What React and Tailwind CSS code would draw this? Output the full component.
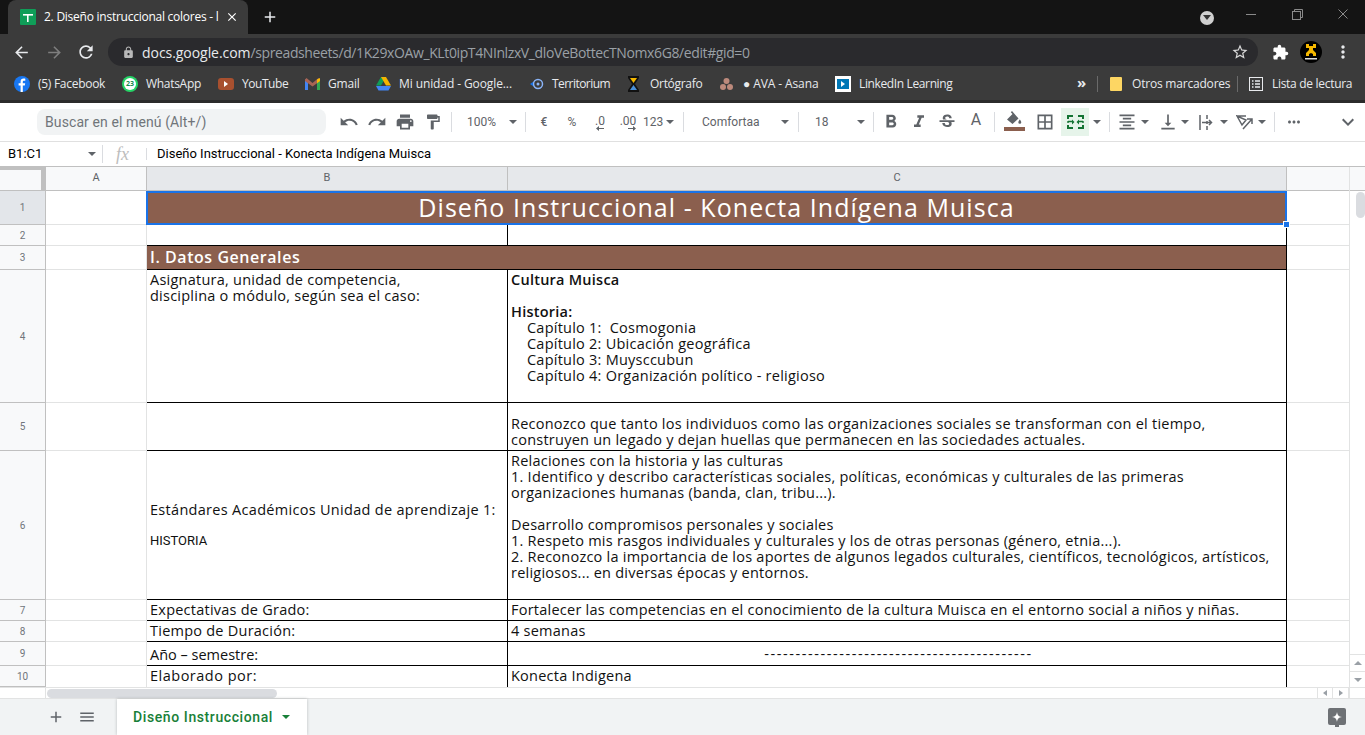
import React from "react";
import { MdUndo, MdRedo, MdPrint, MdFormatPaint, MdFormatBold, MdFormatItalic, MdStrikethroughS, MdBorderAll, MdVerticalAlignBottom, MdMoreHoriz, MdExpandMore, MdArrowBack, MdArrowForward, MdRefresh, MdLock, MdStarBorder, MdExtension, MdMoreVert, MdAdd, MdClose, MdMenu, MdFormatAlignCenter } from "react-icons/md";

const Caret = ({ className = "" }) => <span className={"block w-0 h-0 border-l-[4px] border-r-[4px] border-t-[4px] border-l-transparent border-r-transparent border-t-[#5f6368] " + className} />;
const Divider = ({ className = "" }) => <span className={"block w-px h-[20px] bg-[#dadce0] shrink-0 " + className} />;
const Btn = ({ children, className = "" }) => <span className={"flex items-center justify-center h-[28px] w-[28px] shrink-0 text-[#5f6368] " + className}>{children}</span>;

function Bookmark({ icon, label, className = "", labelClass = "" }) {
  return (
    <span className={"flex items-center shrink-0 " + className}>
      {icon}
      <span className={"whitespace-nowrap " + labelClass}>{label}</span>
    </span>
  );
}

function ChromeBar() {
  return (
    <div className="font-['Open_Sans',sans-serif]">
      <div className="h-[34px] bg-[#141414] flex items-end pl-[8px]">
        <div className="w-[240px] h-[34px] bg-[#3b3b3b] rounded-t-[8px] flex items-center pl-[12px] text-white text-[12px]">
          <svg width="16" height="16" viewBox="0 0 16 16" className="shrink-0"><rect width="16" height="16" rx="1" fill="#0f9d58" /><rect x="3" y="5" width="10" height="1.6" fill="#fff" /><rect x="7" y="5" width="1.6" height="8" fill="#fff" /></svg>
          <span className="ml-[8px] w-[176px] overflow-hidden whitespace-nowrap tracking-[-0.25px]">2. Diseño instruccional colores - l</span>
          <MdClose size={14} className="ml-[5px] text-white" />
        </div>
        <div className="h-[34px] flex items-center ml-[13px] text-[#e8eaed]"><MdAdd size={18} /></div>
        <div className="flex-1" />
        <div className="h-[34px] flex items-center mr-[17px]">
          <span className="w-[14px] h-[14px] rounded-full bg-[#d0d0d0] flex items-center justify-center mr-[32px] mt-[1px]"><span className="block w-0 h-0 border-l-[4px] border-r-[4px] border-t-[5px] border-l-transparent border-r-transparent border-t-[#333]" /></span>
          <span className="w-[10px] h-px bg-[#8a8a8a] mr-[36px] mb-[6px]" />
          <svg width="11" height="11" viewBox="0 0 11 11" className="mr-[35px] mb-[6px]" fill="none" stroke="#8a8a8a"><rect x="0.5" y="2.5" width="8" height="8" /><path d="M2.5 2.5V.5h8v8H8.5" /></svg>
          <svg width="10" height="10" viewBox="0 0 10 10" className="mb-[6px]" stroke="#8a8a8a"><path d="M.5.5l9 9M9.5.5l-9 9" /></svg>
        </div>
      </div>
      <div className="h-[33px] bg-[#3b3b3b] flex items-center pt-[3px]">
        <MdArrowBack size={19} className="ml-[12px] text-[#e8eaed]" />
        <MdArrowForward size={19} className="ml-[14px] text-[#7e7e7e]" />
        <MdRefresh size={20} className="ml-[12px] text-[#e8eaed]" />
        <div className="ml-[12px] w-[1150px] h-[28px] rounded-full bg-[#2a2a2d] flex items-center relative">
          <MdLock size={13} className="ml-[14px] text-[#b8b8b8]" />
          <span className="ml-[7px] text-[14px] whitespace-nowrap"><span className="text-[#e8eaed] tracking-[-0.05px]">docs.google.com</span><span className="text-[#9aa0a6] tracking-[-0.39px]">/spreadsheets/d/1K29xOAw_KLt0ipT4NInlzxV_dloVeBottecTNomx6G8/edit#gid=0</span></span>
          <MdStarBorder size={18} className="absolute right-[9px] top-[5px] text-[#d8d8d8]" />
        </div>
        <MdExtension size={17} className="ml-[14px] text-white" />
        <svg width="22" height="22" viewBox="0 0 22 22" className="ml-[11px]"><circle cx="11" cy="11" r="11" fill="#000" /><path d="M6 3h3v2h4V3h3v4h-3v2l3 3v3h-3v-2l-2-1-2 1v2H6v-3l3-3V7H6z" fill="#f5b800" /><rect x="5" y="17" width="12" height="1.500" fill="#ddd" /></svg>
        <MdMoreVert size={20} className="ml-[11px] text-[#e8eaed]" />
      </div>
      <div className="h-[33px] bg-[#3b3b3b] flex items-center text-[12px] text-[#e8eaed] pl-[14px]">
        <Bookmark labelClass="w-[67px] tracking-[-0.28px]" label="(5) Facebook" icon={<svg width="16" height="16" viewBox="0 0 16 16" className="mr-[8px]"><circle cx="8" cy="8" r="8" fill="#1877f2" /><path d="M8.8 16V9.6h2l.4-2.3H8.8V5.9c0-.7.3-1.2 1.3-1.2h1.2V2.7c-.4-.1-1-.1-1.7-.1-1.9 0-3 1.100-3 3.100v1.600h-2v2.300h2V16z" fill="#fff" /></svg>} />
        <Bookmark className="ml-[17px]" labelClass="w-[55px] tracking-[-0.3px]" label="WhatsApp" icon={<span className="w-[16px] h-[16px] mr-[8px] rounded-full bg-[#25d366] flex items-center justify-center"><span className="w-[12px] h-[12px] rounded-full bg-white text-[#128c4b] text-[7px] leading-[12px] text-center font-bold">23</span></span>} />
        <Bookmark className="ml-[17px]" labelClass="w-[46px] tracking-[-0.45px]" label="YouTube" icon={<span className="w-[16px] h-[12px] mr-[8px] rounded-[3px] bg-[#a8502f] flex items-center justify-center"><span className="block w-0 h-0 border-y-[3px] border-l-[4px] border-y-transparent border-l-white" /></span>} />
        <Bookmark className="ml-[17px]" labelClass="w-[31px] tracking-[-0.2px]" label="Gmail" icon={<svg width="15" height="12" viewBox="0 0 15 12" className="mr-[8px]"><path d="M0 1.500h3v10.500H0z" fill="#4285f4" /><path d="M12 1.500h3v10.500h-3z" fill="#34a853" /><path d="M0 1.500L1.500 0 7.500 5 13.500 0 15 1.500V3L12 5.200 7.500 8.500 3 5.200 0 3z" fill="#a86454" /><path d="M12 1.500 15 0v3l-3 2.200z" fill="#fbbc04" /></svg>} />
        <Bookmark className="ml-[17px]" labelClass="w-[113px] tracking-[-0.1px]" label="Mi unidad - Google..." icon={<svg width="15" height="14" viewBox="0 0 15 14" className="mr-[8px]"><path d="M5 0h5L5 8.500H0z" fill="#0f9d58" /><path d="M5 0h5l5 8.500h-5z" fill="#f4b400" /><path d="M0 9h15l-2.500 4.500h-10z" fill="#4285f4" /></svg>} />
        <Bookmark className="ml-[18px]" labelClass="w-[58px] tracking-[-0.55px]" label="Territorium" icon={<svg width="14" height="12" viewBox="0 0 14 12" className="mr-[8px]" fill="none"><circle cx="8" cy="6" r="4.500" stroke="#8ab4f8" strokeWidth="1.500" /><circle cx="8" cy="6" r="1.500" fill="#8ab4f8" /><path d="M0 6l3-2v4z" fill="#1a73e8" /></svg>} />
        <Bookmark className="ml-[17px]" labelClass="w-[53px] tracking-[-0.3px]" label="Ortógrafo" icon={<svg width="13" height="16" viewBox="0 0 13 16" className="mr-[10px]"><path d="M1 0h11v2L8 8l4 6v2H1v-2l4-6-4-6z" fill="#111" /><path d="M3 2h7L6.500 7z" fill="#f5b800" /><path d="M6.500 9L10 14H3z" fill="#4a90d9" /></svg>} />
        <Bookmark className="ml-[17px]" labelClass="w-[75px] tracking-[-0.1px]" label="● AVA - Asana" icon={<svg width="13" height="12" viewBox="0 0 13 12" className="mr-[10px]" fill="#bd8a7c"><circle cx="6.500" cy="3" r="3" /><circle cx="3" cy="9" r="3" /><circle cx="10" cy="9" r="3" /></svg>} />
        <Bookmark className="ml-[17px]" labelClass="w-[93px] tracking-[-0.37px]" label="LinkedIn Learning" icon={<span className="w-[16px] h-[16px] mr-[8px] bg-white flex items-center justify-center"><span className="w-[12px] h-[10px] bg-[#0077b5] flex items-center justify-center"><span className="block w-0 h-0 border-y-[3px] border-l-[4px] border-y-transparent border-l-white" /></span></span>} />
        <span className="ml-[125px] w-[10px] text-[15px] font-bold leading-none mb-[3px]">»</span>
        <span className="ml-[10px] w-px h-[16px] bg-[#6a6a6a]" />
        <Bookmark className="ml-[12px]" labelClass="w-[95px] tracking-[-0.2px]" label="Otros marcadores" icon={<span className="w-[12px] h-[14px] mr-[10px] bg-[#fdd663] rounded-[1px]" />} />
        <span className="ml-[10px] w-px h-[16px] bg-[#6a6a6a]" />
        <Bookmark className="ml-[11px]" labelClass="w-[80px] tracking-[-0.3px]" label="Lista de lectura" icon={<svg width="14" height="14" viewBox="0 0 14 14" className="mr-[9px]" fill="none" stroke="#e8eaed"><rect x=".5" y=".5" width="13" height="13" /><path d="M3 4h1.500M6 4h5M3 7h1.500M6 7h5M3 10h1.500M6 10h5" strokeWidth="1.300" /></svg>} />
      </div>
      <div className="h-[3px] bg-[#2b2b2b]" />
    </div>
  );
}

function SheetToolbar() {
  return (
    <div className="h-[39px] bg-white border-b border-[#e0e0e0] flex items-center pl-[37px] font-['Roboto',sans-serif] text-[#5f6368]">
      <div className="w-[289px] h-[26px] rounded-[8px] bg-[#f1f3f4] flex items-center pl-[8px] text-[14px] text-[#70757a] tracking-[0.1px] shrink-0">Buscar en el menú (Alt+/)</div>
      <Btn className="ml-[9px]"><MdUndo size={20} /></Btn>
      <Btn><MdRedo size={20} /></Btn>
      <Btn><MdPrint size={20} /></Btn>
      <Btn><MdFormatPaint size={18} /></Btn>
      <Divider className="ml-[4px]" />
      <span className="ml-[15px] w-[28px] text-[12px] leading-none">100%</span>
      <Caret className="ml-[14px]" />
      <Divider className="ml-[8px]" />
      <Btn className="ml-[4px] text-[12px] font-medium">€</Btn>
      <Btn className="text-[12px]">%</Btn>
      <Btn className="text-[12px] relative pb-[3px]">.0
        <svg width="8" height="5" viewBox="0 0 8 5" className="absolute left-[10px] top-[18px]" fill="#5f6368"><path d="M0 2.500L3 0v2h5v1H3v2z" /></svg>
      </Btn>
      <Btn className="text-[12px] relative pb-[3px]">.00
        <svg width="8" height="5" viewBox="0 0 8 5" className="absolute left-[14px] top-[18px]" fill="#5f6368"><path d="M8 2.500L5 0v2H0v1h5v2z" /></svg>
      </Btn>
      <span className="text-[12px] ml-[1px] w-[22px]">123</span>
      <Caret className="ml-[1px]" />
      <Divider className="ml-[9px]" />
      <span className="ml-[18px] w-[58px] text-[12px]">Comfortaa</span>
      <Caret className="ml-[21px]" />
      <Divider className="ml-[9px]" />
      <span className="ml-[16px] w-[16px] text-[12px]">18</span>
      <Caret className="ml-[26px]" />
      <Divider className="ml-[8px]" />
      <Btn className="ml-[3px]"><MdFormatBold size={22} /></Btn>
      <Btn><MdFormatItalic size={20} /></Btn>
      <Btn><MdStrikethroughS size={20} /></Btn>
      <Btn className="text-[16px] pb-[4px] ml-[1px]">A</Btn>
      <Divider className="ml-[4px]" />
      <span className="ml-[5px] w-[28px] h-[28px] shrink-0 flex flex-col items-center pt-[3px]">
        <svg width="16" height="13" viewBox="0 0 16 13" fill="#5f6368"><path d="M6 0L4.800 1.200 6.500 2.900 1 8.400 6.500 13l6-5.500zM13.800 8.500s-1.500 1.800-1.500 2.800a1.500 1.500 0 003 0c0-1-1.500-2.800-1.500-2.800z" /></svg>
        <span className="block w-[21px] h-[4px] bg-[#8b5f4e] mt-[3px]" />
      </span>
      <Btn className="ml-[3px]"><MdBorderAll size={20} /></Btn>
      <Btn className="ml-[2px] bg-[#e6f4ea]">
        <svg width="17" height="14" viewBox="0 0 17 14" fill="none" stroke="#137333" strokeWidth="2"><path d="M1 4V1h5M11 1h5v3M1 10v3h5M11 13h5v-3" /><path d="M1 6.500h4M12 6.500h4M1 6v2M16 6v2" strokeWidth="1.400" /><path d="M7.500 7L5 4.500v5zM9.500 7L12 4.500v5z" fill="#137333" stroke="none" /></svg>
      </Btn>
      <Caret className="ml-[4px]" />
      <Divider className="ml-[8px]" />
      <Btn className="ml-[3px]"><MdFormatAlignCenter size={20} /></Btn>
      <Caret />
      <Btn className="ml-[5px]"><MdVerticalAlignBottom size={20} /></Btn>
      <Caret className="ml-[-1px]" />
      <Btn className="ml-[3px]">
        <svg width="15" height="15" viewBox="0 0 15 15" fill="none" stroke="#5f6368" strokeWidth="1.500"><path d="M1 0v15M8 0v4M8 6v3M8 11v4M3 7.500h9M10 5l2.500 2.500L10 10" /></svg>
      </Btn>
      <Caret />
      <Btn className="ml-[2px]">
        <svg width="17" height="15" viewBox="0 0 17 15" fill="none" stroke="#5f6368" strokeWidth="1.500"><path d="M1 1l5 9 4-5zM1 1h9M7 14l9-10M11 4h5v5" /></svg>
      </Btn>
      <Caret />
      <Divider className="ml-[8px]" />
      <Btn className="ml-[5px]"><MdMoreHoriz size={18} /></Btn>
      <Btn className="ml-[26px]"><MdExpandMore size={24} /></Btn>
    </div>
  );
}

function FormulaBar() {
  return (
    <div className="h-[25px] bg-white flex items-center font-['Roboto',sans-serif] text-[13px] text-black border-b border-[#c0c0c0]">
      <span className="ml-[8px] w-[80px]">B1:C1</span>
      <Caret />
      <span className="ml-[6px] w-px h-[18px] bg-[#dadce0]" />
      <span className="ml-[13px] w-[30px] font-['Liberation_Serif',serif] italic text-[18px] text-[#bdbdbd] leading-none">fx</span>
      <span className="w-px h-[12px] bg-[#dadce0]" />
      <span className="ml-[10px]">Diseño Instruccional - Konecta Indígena Muisca</span>
    </div>
  );
}

const F = "font-['Open_Sans',sans-serif] text-[14.5px] tracking-[0.24px] text-[#111] whitespace-nowrap";
const Line = ({ children, className = "" }) => <div className={"h-[16px] leading-[16px] " + className}>{children}</div>;

function RowHead({ n, sel }) {
  return (
    <div className={"w-[46px] shrink-0 flex items-center justify-center text-[10px] text-[#70757a] font-['Roboto',sans-serif] border-r border-b border-[#c0c0c0] " + (sel ? "bg-[#e3e6ea]" : "bg-[#f8f9fa]")}>{n}</div>
  );
}
const ACell = () => <div className="w-[101px] shrink-0 border-r border-b border-[#e2e3e3] bg-white" />;
const DCell = () => <div className="w-[62px] shrink-0 border-b border-[#e2e3e3] bg-white" />;

function Row({ n, sel, heightClass, b, c, bClass = "", cClass = "" }) {
  return (
    <div className={"flex " + heightClass}>
      <RowHead n={n} sel={sel} />
      <ACell />
      <div className={"w-[361px] shrink-0 border-r border-b border-black pl-[3px] overflow-hidden flex flex-col " + F + " " + bClass}>{b}</div>
      <div className={"w-[779px] shrink-0 border-r border-b border-black pl-[3px] overflow-hidden flex flex-col " + F + " " + cClass}>{c}</div>
      <DCell />
    </div>
  );
}

function Grid() {
  return (
    <div className="flex-1 min-h-0 flex bg-white overflow-hidden">
      <div className="flex-1 min-w-0 flex flex-col">
        <div className="flex h-[24px] text-[11px] text-[#5f6368] font-['Roboto',sans-serif] border-b border-[#c0c0c0]">
          <div className="w-[46px] shrink-0 bg-[#f8f9fa] border-t-[3px] border-r-[5px] border-[#c0c0c0]" />
          <div className="w-[101px] shrink-0 bg-[#f8f9fa] border-r border-[#c0c0c0] flex items-center justify-center">A</div>
          <div className="w-[361px] shrink-0 bg-[#e6e8eb] border-r border-[#c0c0c0] flex items-center justify-center">B</div>
          <div className="w-[779px] shrink-0 bg-[#e6e8eb] border-r border-[#c0c0c0] flex items-center justify-center">C</div>
          <div className="w-[62px] shrink-0 bg-[#f8f9fa]" />
        </div>
        <div className="flex h-[34px]">
          <RowHead n="1" sel />
          <div className="w-[100px] shrink-0 border-b border-[#e2e3e3] bg-white" />
          <div className="w-[1141px] shrink-0 bg-[#8b5f4e] border-2 border-[#1a73e8] flex items-center justify-center text-white font-['Open_Sans',sans-serif] text-[25px] tracking-[1.05px] relative whitespace-nowrap">
            Diseño Instruccional - Konecta Indígena Muisca
            <span className="absolute right-[-5px] bottom-[-5px] w-[7px] h-[7px] bg-[#1a73e8] border border-white" />
          </div>
          <DCell />
        </div>
        <Row n="2" heightClass="h-[21px]" b={null} c={null} />
        <div className="flex h-[24px]">
          <RowHead n="3" />
          <ACell />
          <div className="w-[1140px] shrink-0 bg-[#8b5f4e] border-r border-b border-black pl-[3px] text-white font-['Open_Sans',sans-serif] font-semibold text-[16px] leading-[23px] tracking-[0.55px]">I. Datos Generales</div>
          <DCell />
        </div>
        <Row n="4" heightClass="h-[133px]"
          b={<div className="pt-[2px]"><Line>Asignatura, unidad de competencia,</Line><Line>disciplina o módulo, según sea el caso:</Line></div>}
          c={<div className="pt-[2px]"><Line className="font-semibold">Cultura Muisca</Line><Line /><Line className="font-semibold">Historia:</Line><Line className="pl-[16px]">{"Capítulo 1:\u00a0 Cosmogonia"}</Line><Line className="pl-[16px]">Capítulo 2: Ubicación geográfica</Line><Line className="pl-[16px]">Capítulo 3: Muysccubun</Line><Line className="pl-[16px]">Capítulo 4: Organización político - religioso</Line></div>}
        />
        <Row n="5" heightClass="h-[48px]" b={null} cClass="justify-end pb-[2px]"
          c={<><Line>Reconozco que tanto los individuos como las organizaciones sociales se transforman con el tiempo,</Line><Line>construyen un legado y dejan huellas que permanecen en las sociedades actuales.</Line></>}
        />
        <Row n="6" heightClass="h-[149px]" bClass="justify-center"
          b={<div><Line className="font-medium tracking-[0.3px]">Estándares Académicos Unidad de aprendizaje 1:</Line><div className="h-[15px]" /><Line className="text-[13px] tracking-normal font-['Roboto',sans-serif]">HISTORIA</Line></div>}
          c={<div className="pt-[2px]"><Line>Relaciones con la historia y las culturas</Line><Line>1. Identifico y describo características sociales, políticas, económicas y culturales de las primeras</Line><Line>organizaciones humanas (banda, clan, tribu...).</Line><Line /><Line>Desarrollo compromisos personales y sociales</Line><Line>1. Respeto mis rasgos individuales y culturales y los de otras personas (género, etnia...).</Line><Line>2. Reconozco la importancia de los aportes de algunos legados culturales, científicos, tecnológicos, artísticos,</Line><Line>religiosos... en diversas épocas y entornos.</Line></div>}
        />
        <Row n="7" heightClass="h-[21px]" b={<Line className="font-medium mt-[2px]">Expectativas de Grado:</Line>} c={<Line className="mt-[2px]">Fortalecer las competencias en el conocimiento de la cultura Muisca en el entorno social a niños y niñas.</Line>} />
        <Row n="8" heightClass="h-[21px]" b={<Line className="font-medium mt-[2px]">Tiempo de Duración:</Line>} c={<Line className="mt-[2px]">4 semanas</Line>} />
        <Row n="9" heightClass="h-[24px]" bClass="justify-end pb-[2px]" cClass="items-center justify-end pb-[3px]" b={<Line className="font-medium tracking-normal">Año – semestre:</Line>} c={<Line className="tracking-[1.58px]">-------------------------------------------</Line>} />
        <div className="flex h-[21px]">
          <RowHead n="10" />
          <div className="w-[101px] shrink-0 border-r border-[#e2e3e3] bg-white" />
          <div className={"w-[361px] shrink-0 border-r border-black pl-[3px] pt-[2px] font-medium " + F}><Line className="tracking-[0.5px]">Elaborado por:</Line></div>
          <div className={"w-[779px] shrink-0 border-r border-black pl-[3px] pt-[2px] " + F}><Line>Konecta Indigena</Line></div>
          <div className="w-[62px] shrink-0" />
        </div>
        <div className="h-[12px] flex border-y border-[#e2e3e3] bg-white items-center shrink-0">
          <div className="w-[46px] shrink-0 h-full border-r border-[#e2e3e3]" />
          <div className="w-[230px] h-[9px] rounded-full bg-[#dadce0] ml-[1px]" />
          <div className="flex-1" />
          <div className="w-[16px] h-full border-x border-[#e2e3e3] flex items-center justify-center"><span className="block w-0 h-0 border-y-[3px] border-r-[4px] border-y-transparent border-r-[#9aa0a6]" /></div>
          <div className="w-[16px] h-full border-r border-[#e2e3e3] flex items-center justify-center"><span className="block w-0 h-0 border-y-[3px] border-l-[4px] border-y-transparent border-l-[#9aa0a6]" /></div>
        </div>
      </div>
      <div className="w-[16px] shrink-0 border-l border-[#e2e3e3] flex flex-col bg-white">
        <div className="h-[24px] bg-[#f8f9fa] border-b border-[#c0c0c0] shrink-0" />
        <div className="w-[9px] h-[26px] rounded-full bg-[#dadce0] ml-[6px] mt-[1px]" />
        <div className="flex-1" />
        <div className="h-[17px] border-t border-[#e2e3e3] flex items-center justify-center"><span className="block w-0 h-0 border-x-[4px] border-b-[4px] border-x-transparent border-b-[#9aa0a6]" /></div>
        <div className="h-[16px] border-t border-[#e2e3e3] flex items-center justify-center"><span className="block w-0 h-0 border-x-[4px] border-t-[4px] border-x-transparent border-t-[#9aa0a6]" /></div>
        <div className="h-[12px] border-y border-[#e2e3e3]" />
      </div>
    </div>
  );
}

function TabBar() {
  return (
    <div className="h-[36px] shrink-0 bg-[#f1f3f4] flex items-stretch font-['Roboto',sans-serif]">
      <MdAdd size={18} className="ml-[47px] self-center text-[#5f6368]" />
      <MdMenu size={18} className="ml-[13px] self-center text-[#5f6368]" />
      <div className="ml-[21px] w-[190px] bg-white shadow-[0_0_3px_rgba(60,64,67,0.3)] flex items-center pl-[16px] text-[#188038] text-[14px] font-medium tracking-[0.6px]">
        Diseño Instruccional
        <span className="ml-[9px] block w-0 h-0 border-x-[4px] border-t-[4px] border-x-transparent border-t-[#188038]" />
      </div>
      <div className="flex-1" />
      <div className="self-center mr-[19px] relative w-[18px] h-[17px] mb-[1px] rounded-[2px] bg-[#6e7175] flex items-center justify-center">
        <svg width="10" height="10" viewBox="0 0 10 10" fill="#fff"><path d="M5 0c.5 3 1.500 4.500 5 5-3.500.5-4.500 2-5 5-.5-3-1.500-4.500-5-5 3.500-.5 4.500-2 5-5z" /></svg>
        <span className="absolute bottom-[-2px] left-[7px] w-[4px] h-[2px] bg-[#6e7175]" />
      </div>
    </div>
  );
}

export default function App() {
  return (
    <div className="w-[1365px] h-[735px] overflow-hidden flex flex-col bg-white">
      <ChromeBar />
      <SheetToolbar />
      <FormulaBar />
      <Grid />
      <TabBar />
    </div>
  );
}
